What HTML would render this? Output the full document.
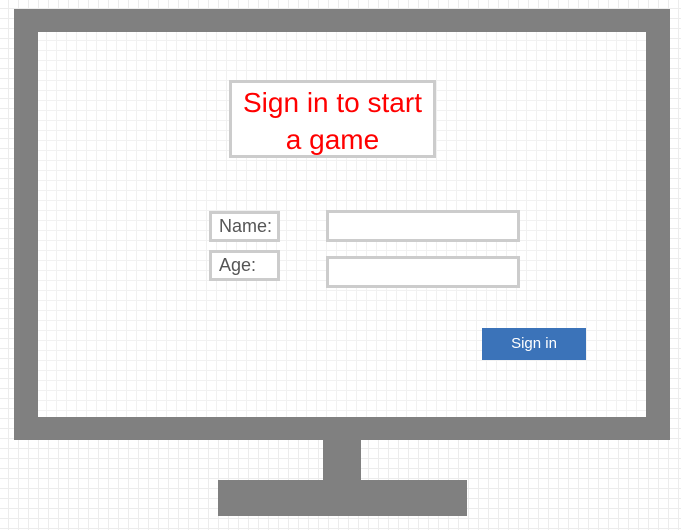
<!DOCTYPE html>
<html><head><style>
body{margin:0;width:681px;height:530px;position:relative;overflow:hidden;background-color:#fff;
background-image:linear-gradient(#ececec 1px,transparent 1px),linear-gradient(90deg,#ececec 1px,transparent 1px);background-size:10px 10px;background-position:-2px -2px;font-family:"Liberation Sans",sans-serif}
div{position:absolute;box-sizing:border-box}
.g{background:#808080}
.b{border:3px solid #cccccc;background:#fff}
.l{color:#555;font-size:18px;padding-left:7px;line-height:25px}
</style></head><body>
<div class="g" style="left:14px;top:9px;width:656px;height:431px"></div>
<div style="left:38px;top:32px;width:608px;height:385px;background-color:#fff;background-image:linear-gradient(#f1f1f1 1px,transparent 1px),linear-gradient(90deg,#f1f1f1 1px,transparent 1px);background-size:10px 10px;background-position:-2px -2px"></div>
<div class="g" style="left:323px;top:440px;width:38px;height:41px"></div>
<div class="g" style="left:218px;top:480px;width:249px;height:36px"></div>
<div class="b" style="left:229px;top:80px;width:207px;height:78px;color:#f00;font-size:28px;text-align:center;line-height:37px;padding-top:1px;white-space:nowrap">Sign in to start<br>a game</div>
<div class="b l" style="left:209px;top:211px;width:71px;height:31px">Name:</div>
<div class="b l" style="left:209px;top:250px;width:71px;height:31px">Age:</div>
<div class="b" style="left:326px;top:210px;width:194px;height:32px"></div>
<div class="b" style="left:326px;top:256px;width:194px;height:32px"></div>
<div style="left:482px;top:328px;width:104px;height:32px;background:#3b73b9;color:#fff;font-size:15px;text-align:center;line-height:32px">Sign in</div>
</body></html>
